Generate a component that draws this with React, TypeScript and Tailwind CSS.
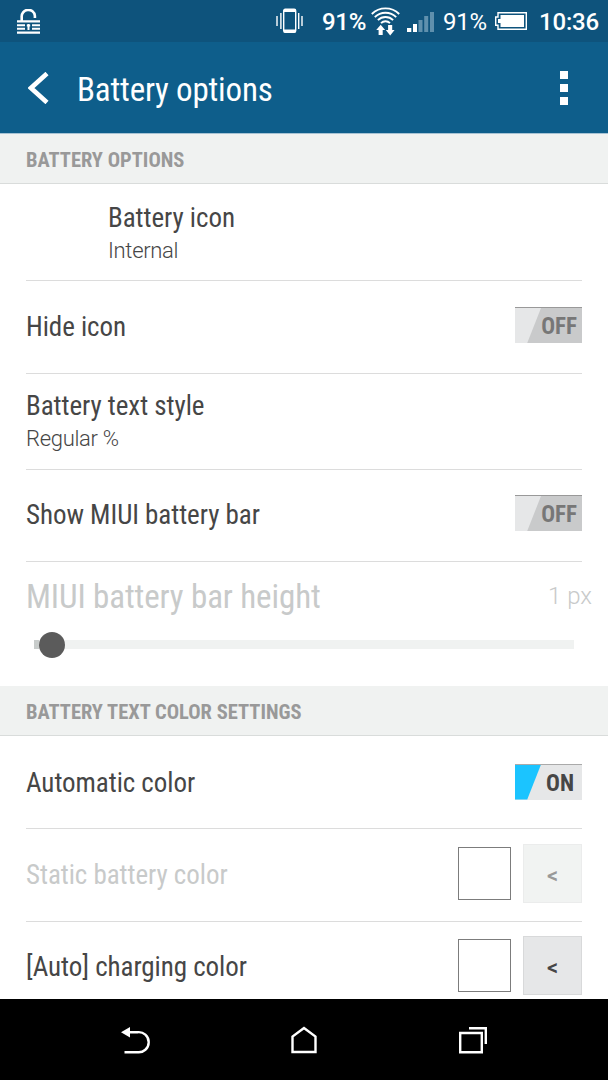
import React from 'react'
import { clsx } from 'clsx'

const condensed = "font-['Roboto_Condensed','Roboto',sans-serif] [font-stretch:75%]"

function StatusBar() {
  return (
    <div className="flex h-[42px] items-center bg-[#0e537c] text-white">
      <svg className="ml-[17px] shrink-0" width="23" height="25" viewBox="0 0 23 25" fill="none">
        <path d="M4.7 12V8.2a6.5 6.5 0 0 1 13.2-1.4V9" stroke="white" strokeWidth="2.6" />
        <path d="M0 12.4h23M0 16.2h8M15 16.2h8M0 19.8h8M15 19.8h8M0 23.6h23" stroke="white" strokeWidth="2.1" />
        <path d="M11.5 15v6M9.8 16.4h3.4" stroke="white" strokeWidth="2" />
      </svg>
      <svg className="ml-[236px] shrink-0" width="27" height="26" viewBox="0 0 27 26" fill="none">
        <path d="M1 8v10M4.9 5v16M22.7 5v16M26 8v10" stroke="white" strokeWidth="1.4" />
        <rect x="7.7" y="1.2" width="12" height="23" rx="1.5" stroke="white" strokeWidth="1.4" />
        <path d="M8 2.6h11.4M8 23h11.4" stroke="white" strokeWidth="3" />
      </svg>
      <span className="mt-[2px] ml-[19px] w-[49px] text-[24px] leading-6 font-medium tracking-[-0.3px] whitespace-nowrap">91%</span>
      <svg className="shrink-0" width="29" height="29" viewBox="0 0 29 29" fill="none">
        <path d="M.8 7a19.6 19.6 0 0 1 27.4 0M3.8 10.2a15.2 15.2 0 0 1 21.4 0M6.9 13.2a10.8 10.8 0 0 1 15.2 0M10 16.1a6.5 6.5 0 0 1 9 0" stroke="white" strokeWidth="1.9" />
        <path d="M9.7 17.8l4.4 5.2h-2.4v5H7.6v-5H5.2zM19.2 28.4L14.8 23h2.3v-5h4.1v5h2.4z" fill="white" />
      </svg>
      <svg className="mt-[2px] ml-[7px] shrink-0" width="27" height="20" viewBox="0 0 27 20">
        <path d="M0 16h4.3v4H0zM6 12h4v8H6z" fill="white" />
        <path d="M11.5 8h4v12h-4zM17.2 4h4v16h-4zM23 0h4v20h-4z" fill="#5f90ad" />
      </svg>
      <span className="mt-[2px] ml-[9px] w-[46px] text-[24px] leading-6 tracking-[-0.2px] whitespace-nowrap">91%</span>
      <svg className="ml-[6px] shrink-0" width="32" height="18" viewBox="0 0 32 18" fill="none">
        <path d="M3 .7h28.3v16.6H3v-4H.7V5H3z" stroke="white" strokeWidth="1.4" />
        <path d="M5.5 3H29v12H5.5v-4H3V7h2.5z" fill="white" />
      </svg>
      <span className="mt-[2px] ml-[12px] text-[24px] leading-6 font-medium tracking-[-0.2px] whitespace-nowrap">10:36</span>
    </div>
  )
}

function TitleBar() {
  return (
    <div className="flex h-[92px] items-center border-b border-[#a7c3d4] bg-[#0e5e8b] text-white">
      <svg className="ml-7 shrink-0" width="21" height="32" viewBox="0 0 21 32" fill="none">
        <path d="M19 1.5L3 16l16 14.5" stroke="white" strokeWidth="4.6" />
      </svg>
      <h1 className={clsx(condensed, 'mt-[5px] ml-[28px] flex-1 text-[33px] leading-10 tracking-[-0.18px]')}>Battery options</h1>
      <div className="mr-[40px] flex flex-col gap-[5px]">
        <i className="size-2 bg-white" />
        <i className="size-2 bg-white" />
        <i className="size-2 bg-white" />
      </div>
    </div>
  )
}

function SectionHeader({ children }: { children: React.ReactNode }) {
  return (
    <h2 className={clsx(condensed, 'flex h-[50px] items-center border-b border-[#d9dcdb] bg-[#f0f2f1] px-[26px] pt-[3px] text-[20.5px] font-bold text-[#999]')}>
      {children}
    </h2>
  )
}

interface RowProps {
  title: string
  summary?: string
  disabled?: boolean
  className?: string
  children?: React.ReactNode
}

function Row({ title, summary, disabled, className, children }: RowProps) {
  return (
    <div className={clsx('mx-[26px] flex items-center border-b border-[#dcdcdc]', className)}>
      <div className="flex-1">
        <div className={clsx(condensed, 'text-[27px] leading-8 tracking-[-0.05px] whitespace-nowrap', disabled ? 'text-[#c8caca]' : 'text-[#464646]')}>{title}</div>
        {summary && <div className="mt-px text-[22px] leading-8 font-light tracking-[-0.3px] text-[#464646]">{summary}</div>}
      </div>
      {children}
    </div>
  )
}

function Toggle({ on }: { on?: boolean }) {
  return (
    <div className={clsx('flex h-9 w-[67px] border-t', on ? 'mb-[2px] border-[#aaa] bg-[#e6e7e8]' : 'mb-[3px] border-[#999] bg-[#c9cacb]')}>
      <div className={clsx('w-[26px] [clip-path:polygon(0_0,100%_0,47%_100%,0_100%)]', on ? 'bg-[#1bc4ff]' : 'bg-[#e6e7e8]')} />
      <span className={clsx(condensed, 'flex-1 text-[23px] leading-[38px] font-bold', on ? 'pr-[8px] text-right text-[#464646]' : 'pr-[5px] text-right text-[#777]')}>
        {on ? 'ON' : 'OFF'}
      </span>
    </div>
  )
}

function ColorPicker({ disabled }: { disabled?: boolean }) {
  return (
    <div className="mb-[3px] flex items-center gap-3">
      <div className="size-[53px] border border-[#7c7c7c] bg-white" />
      <button
        className={clsx(
          'flex h-[59px] w-[59px] items-center justify-center border pt-[3px] text-[22px] font-medium',
          disabled ? 'border-[#ebecec] bg-[#f1f3f2] text-[#999]' : 'border-[#d8d9da] bg-[#e6e7e8] text-[#464646]'
        )}
      >
        &lt;
      </button>
    </div>
  )
}

function HeightSlider() {
  return (
    <div className="h-[124px]">
      <div className="flex h-[68px] items-center justify-between pr-[16px] pl-[26px] text-[#c8caca]">
        <span className={clsx(condensed, 'pt-px text-[33px] leading-10 tracking-[-0.1px]')}>MIUI battery bar height</span>
        <span className="text-[24px] font-light">1 px</span>
      </div>
      <div className="mr-[34px] ml-[34px] flex h-[29px] items-center">
        <div className="h-[9px] w-[5px] bg-[#c8cccb]" />
        <div className="size-[26px] rounded-full bg-[#5b5b5b]" />
        <div className="h-[9px] flex-1 bg-[#f0f2f1]" />
      </div>
    </div>
  )
}

function NavBar() {
  return (
    <div className="flex h-[81px] shrink-0 items-center bg-black">
      <svg className="ml-[121px]" width="30" height="28" viewBox="0 0 30 28" fill="none">
        <path d="M8 6.2h8.5a10 10 0 0 1 11.2 10 10 10 0 0 1-11.2 10H3.5" stroke="white" strokeWidth="2.4" />
        <path d="M0 6.2L9 1v10.5z" fill="white" />
      </svg>
      <svg className="ml-[140px]" width="26" height="28" viewBox="0 0 26 28" fill="none">
        <path d="M1.5 26V10.5L13 2l11.5 8.5V26z" stroke="white" strokeWidth="2.4" />
      </svg>
      <svg className="ml-[142px]" width="28" height="28" viewBox="0 0 28 28" fill="none">
        <path d="M1.2 7h21.6v19.3H1.2zM10 2.2h16.8V18" stroke="white" strokeWidth="2.4" />
      </svg>
    </div>
  )
}

export default function App() {
  return (
    <div className="flex h-[1080px] w-[608px] flex-col overflow-hidden bg-white font-['Roboto',sans-serif]">
      <StatusBar />
      <TitleBar />
      <div className="min-h-0 flex-1 overflow-hidden">
        <SectionHeader>BATTERY OPTIONS</SectionHeader>
        <Row title="Battery icon" summary="Internal" className="h-[97px] pt-[4px] pl-[82px]" />
        <Row title="Hide icon" className="h-[93px] pb-px">
          <Toggle />
        </Row>
        <Row title="Battery text style" summary="Regular %" className="h-[96px] pt-[2px]" />
        <Row title="Show MIUI battery bar" className="h-[92px] pb-[2px]">
          <Toggle />
        </Row>
        <HeightSlider />
        <SectionHeader>BATTERY TEXT COLOR SETTINGS</SectionHeader>
        <Row title="Automatic color" className="h-[93px] pt-px">
          <Toggle on />
        </Row>
        <Row title="Static battery color" disabled className="h-[93px]">
          <ColorPicker disabled />
        </Row>
        <Row title="[Auto] charging color" className="h-[92px] pb-px">
          <ColorPicker />
        </Row>
      </div>
      <NavBar />
    </div>
  )
}
